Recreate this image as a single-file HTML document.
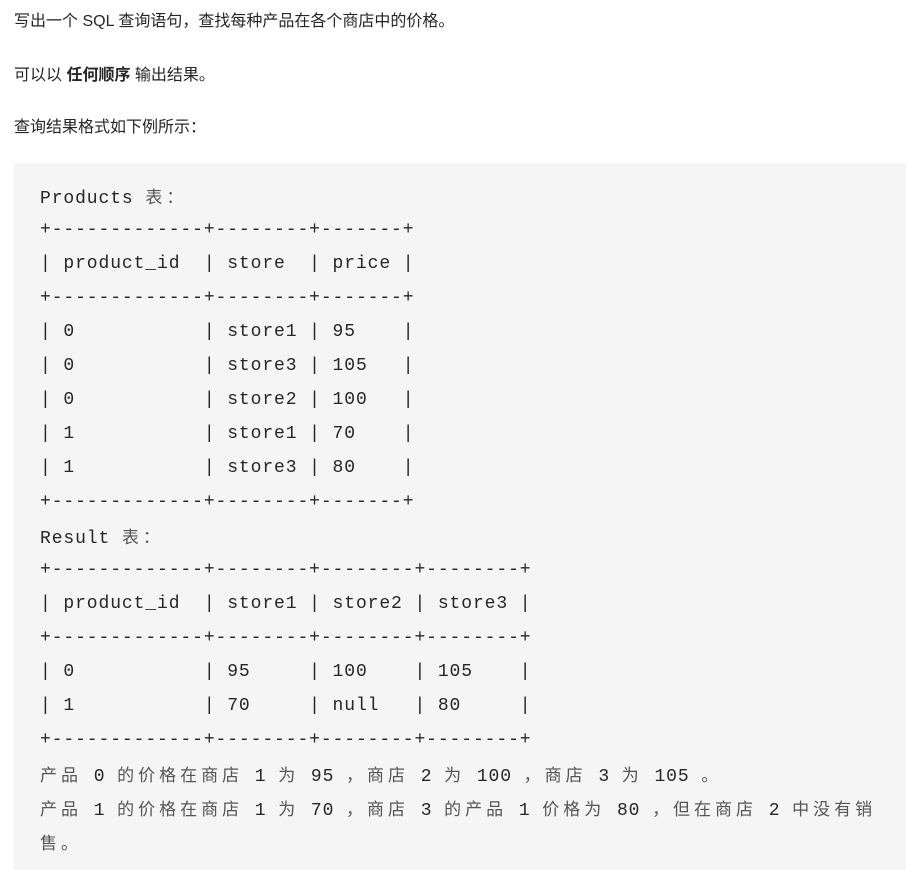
<!DOCTYPE html>
<html><head><meta charset="utf-8"><style>
body{margin:0;background:#fff;width:906px;height:870px;overflow:hidden;font-family:"Liberation Sans","Noto Sans CJK SC",sans-serif;color:#262626;}
p{position:absolute;left:14px;margin:0;font-size:16px;line-height:20px;}
.pre{position:absolute;left:14px;top:163px;width:892px;height:707px;background:#f5f5f5;}
.l{position:absolute;left:40px;white-space:pre;font-family:"Liberation Mono",monospace;font-size:18px;letter-spacing:0.9px;line-height:20px;color:#262626;}
.c{font-family:"Noto Sans CJK SC",sans-serif;font-size:17px;letter-spacing:4px;color:#555;}
</style></head><body>
<p style="top:12px">写出一个 SQL 查询语句，查找每种产品在各个商店中的价格。</p>
<p style="top:66px">可以以 <b>任何顺序</b> 输出结果。</p>
<p style="top:118px">查询结果格式如下例所示：</p>
<div class="pre"></div>
<div class="l" style="top:186px">Products <span class="c">表：</span></div>
<div class="l" style="top:220px">+-------------+--------+-------+</div>
<div class="l" style="top:254px">| product_id  | store  | price |</div>
<div class="l" style="top:288px">+-------------+--------+-------+</div>
<div class="l" style="top:322px">| 0           | store1 | 95    |</div>
<div class="l" style="top:356px">| 0           | store3 | 105   |</div>
<div class="l" style="top:390px">| 0           | store2 | 100   |</div>
<div class="l" style="top:424px">| 1           | store1 | 70    |</div>
<div class="l" style="top:458px">| 1           | store3 | 80    |</div>
<div class="l" style="top:492px">+-------------+--------+-------+</div>
<div class="l" style="top:526px">Result <span class="c">表：</span></div>
<div class="l" style="top:560px">+-------------+--------+--------+--------+</div>
<div class="l" style="top:594px">| product_id  | store1 | store2 | store3 |</div>
<div class="l" style="top:628px">+-------------+--------+--------+--------+</div>
<div class="l" style="top:662px">| 0           | 95     | 100    | 105    |</div>
<div class="l" style="top:696px">| 1           | 70     | null   | 80     |</div>
<div class="l" style="top:730px">+-------------+--------+--------+--------+</div>
<div class="l" style="top:764px"><span class="c">产品</span> 0 <span class="c">的价格在商店</span> 1 <span class="c">为</span> 95 <span class="c">，商店</span> 2 <span class="c">为</span> 100 <span class="c">，商店</span> 3 <span class="c">为</span> 105 <span class="c">。</span></div>
<div class="l" style="top:798px"><span class="c">产品</span> 1 <span class="c">的价格在商店</span> 1 <span class="c">为</span> 70 <span class="c">，商店</span> 3 <span class="c">的产品</span> 1 <span class="c">价格为</span> 80 <span class="c">，但在商店</span> 2 <span class="c">中没有销</span></div>
<div class="l" style="top:832px"><span class="c">售。</span></div>
</body></html>
